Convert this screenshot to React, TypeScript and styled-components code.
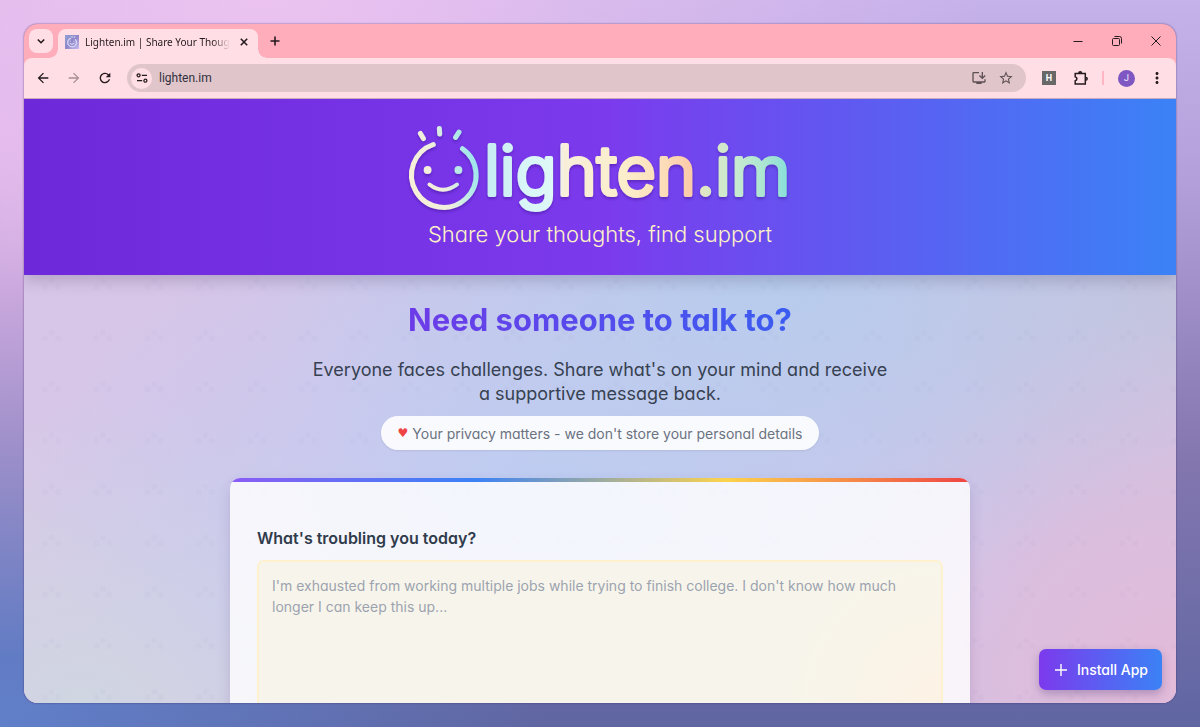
import React from "react";
import styled, { createGlobalStyle } from "styled-components";
import {
  MdArrowBack,
  MdArrowForward,
  MdRefresh,
  MdStarBorder,
  MdMoreVert,
  MdOutlineInstallDesktop,
} from "react-icons/md";

const bodyFont = `Inter, "Open Sans", sans-serif`;
const chromeFont = `Roboto, "Noto Sans", sans-serif`;

const GlobalStyle = createGlobalStyle`
  *, *::before, *::after { box-sizing: border-box; }
  body { margin: 0; font-family: ${bodyFont}; }
  button, input, textarea { font: inherit; color: inherit; border: 0; padding: 0; margin: 0; background: none; }
  button { cursor: pointer; }
  h1, h2, p { margin: 0; }
`;

const Desktop = styled.div`
  height: 100vh;
  padding: 24px;
  background:
    radial-gradient(ellipse 60% 45% at 22% 0%, rgba(238, 196, 241, 0.9), rgba(238, 196, 241, 0) 100%),
    radial-gradient(ellipse 50% 70% at 0% 20%, rgba(232, 186, 236, 0.8), rgba(232, 186, 236, 0) 100%),
    radial-gradient(ellipse 45% 60% at 0% 100%, rgba(96, 130, 206, 0.9), rgba(96, 130, 206, 0) 100%),
    linear-gradient(to bottom, #c6b2ea 0%, #b3a0da 25%, #8577b0 62%, #5f66a2 100%);
`;

const BrowserWindow = styled.div`
  height: 100%;
  display: flex;
  flex-direction: column;
  overflow: hidden;
  border-radius: 14px;
  background: #ffadbb;
  box-shadow: 0 0 2px rgba(50, 30, 90, 0.7);
`;

const TabStrip = styled.div`
  display: flex;
  align-items: center;
  height: 34px;
  flex: none;
  padding: 0 1px 0 5px;
  color: #251a1e;
`;

const TabSearch = styled.button`
  display: grid;
  place-items: center;
  width: 24px;
  height: 24px;
  border-radius: 8px;
  background: #ffdfe5;
`;

const Tab = styled.div`
  position: relative;
  align-self: flex-end;
  display: flex;
  align-items: center;
  gap: 6px;
  width: 200px;
  height: 29px;
  margin-left: 5px;
  padding: 0 6px 4px 7px;
  border-radius: 8px 8px 0 0;
  background: #ffdfe5;
  font: 10px/16px "Noto Sans", sans-serif;
  &::before, &::after {
    content: "";
    position: absolute;
    bottom: 0;
    width: 8px;
    height: 8px;
  }
  &::before {
    left: -8px;
    background: radial-gradient(circle at 0 0, transparent 7px, #ffdfe5 8px);
  }
  &::after {
    right: -8px;
    background: radial-gradient(circle at 100% 0, transparent 7px, #ffdfe5 8px);
  }
`;

const TabTitle = styled.span`
  flex: 1;
  min-width: 0;
  white-space: nowrap;
  mask-image: linear-gradient(to right, #000 88%, transparent);
`;

const PlainButton = styled.button`
  display: grid;
  place-items: center;
  flex: none;
  width: 16px;
  height: 16px;
`;

const NewTab = styled(PlainButton)`
  width: 24px;
  height: 24px;
  margin-left: 5px;
`;

const WindowControls = styled.div`
  display: flex;
  margin-left: auto;
`;

const WindowButton = styled.button`
  display: grid;
  place-items: center;
  width: 39px;
  height: 34px;
`;

const Toolbar = styled.div`
  display: flex;
  align-items: center;
  flex: none;
  height: 41px;
  padding: 0 9px 0 5px;
  border-radius: 8px 8px 0 0;
  border-bottom: 1px solid #c9aab8;
  background: #ffdfe5;
  color: #251a1e;
`;

const NavButtons = styled.div`
  display: flex;
  gap: 3px;
  margin-right: 8px;
`;

const ToolButton = styled.button<{ $muted?: boolean }>`
  display: grid;
  place-items: center;
  width: 28px;
  height: 28px;
  color: ${(p) => (p.$muted ? "#a98f96" : "#251a1e")};
`;

const Omnibox = styled.div`
  display: flex;
  align-items: center;
  flex: 1;
  height: 28px;
  padding: 0 12px 0 4px;
  border-radius: 14px;
  background: #e0c5cb;
  color: #5d5054;
`;

const SiteChip = styled.button`
  display: grid;
  place-items: center;
  width: 21px;
  height: 21px;
  border-radius: 50%;
  background: #ffdfe5;
  color: #251a1e;
`;

const Address = styled.input`
  flex: 1;
  min-width: 0;
  margin-left: 7px;
  outline: 0;
  font: 12px/18px ${chromeFont};
  color: #30303c;
`;

const OmniActions = styled.div`
  display: flex;
  gap: 11px;
`;

const Extensions = styled.div`
  display: flex;
  align-items: center;
  gap: 4px;
  margin-left: 9px;
`;

const HBadge = styled.span`
  display: grid;
  place-items: center;
  width: 14px;
  height: 14px;
  background: #686868;
  color: #fff;
  font: 700 9px/14px Roboto, sans-serif;
`;

const Separator = styled.span`
  width: 2px;
  height: 14px;
  margin: 0 14px 0 7px;
  background: #ffb5c3;
`;

const Avatar = styled.button`
  width: 17px;
  height: 17px;
  margin-right: 12px;
  border-radius: 50%;
  background: #7e57c2;
  color: #f2eafb;
  font: 9px/17px Roboto, sans-serif;
  text-align: center;
`;

const MenuButton = styled(PlainButton)`
  width: 20px;
  height: 28px;
`;

const PageFrame = styled.div`
  position: relative;
  flex: 1;
  min-height: 0;
  overflow: hidden;
`;

const Page = styled.main`
  position: relative;
  height: 100%;
  overflow: hidden auto;
  scrollbar-width: none;
  font-feature-settings: "cv11" 1;
  background:
    radial-gradient(ellipse 45% 55% at 65% 28%, rgba(180, 205, 238, 0.9), rgba(180, 205, 238, 0) 100%),
    radial-gradient(ellipse 45% 50% at 45% 65%, rgba(190, 206, 244, 0.9), rgba(190, 206, 244, 0) 100%),
    radial-gradient(ellipse 40% 50% at 5% 100%, rgba(208, 214, 226, 1), rgba(208, 214, 226, 0) 100%),
    radial-gradient(ellipse 35% 60% at 100% 95%, rgba(227, 187, 217, 1), rgba(227, 187, 217, 0) 100%),
    radial-gradient(ellipse 40% 45% at 100% 30%, rgba(199, 194, 218, 1), rgba(199, 194, 218, 0) 100%),
    linear-gradient(to right, #d8c6e8, #d0c2e6);
`;

const Backdrop = styled.svg`
  position: absolute;
  inset: 0;
  width: 100%;
  height: 100%;
  pointer-events: none;
`;

const Hero = styled.header`
  position: relative;
  display: flex;
  flex-direction: column;
  align-items: center;
  gap: 3px;
  padding: 21px 16px 26px;
  background: linear-gradient(to right, #6d28d9 0%, #7c3aed 50%, #3b82f6 100%);
  box-shadow: 0 6px 14px rgba(40, 30, 70, 0.2);
`;

const LogoLink = styled.a`
  display: block;
  height: 96px;
`;

const Tagline = styled.p`
  font-size: 22px;
  font-weight: 300;
  line-height: 30px;
  color: #fef3c7;
`;

const Intro = styled.section`
  position: relative;
  display: flex;
  flex-direction: column;
  align-items: center;
  padding: 25px 16px 28px;
  text-align: center;
`;

const Headline = styled.h2`
  font-size: 31px;
  font-weight: 700;
  line-height: 40px;
  background: linear-gradient(to right, #6d3be8, #3b5cf0);
  background-clip: text;
  color: transparent;
`;

const Lead = styled.p`
  max-width: 580px;
  margin-top: 18px;
  font-size: 18px;
  line-height: 24px;
  color: #374151;
`;

const PrivacyNote = styled.p`
  display: flex;
  align-items: center;
  gap: 4px;
  height: 34px;
  margin-top: 10px;
  padding: 0 17px;
  border-radius: 17px;
  background: rgba(255, 255, 255, 0.9);
  box-shadow: 0 1px 2px rgba(0, 0, 0, 0.08);
  font-size: 14px;
  color: #6b7280;
`;

const Heart = styled.span`
  font: 12px/18px "DejaVu Sans", sans-serif;
  color: #ef4444;
`;

const Card = styled.form`
  position: relative;
  width: calc(100% - 32px);
  max-width: 740px;
  margin: 0 auto;
  overflow: hidden;
  border-radius: 10px;
  background: rgba(255, 255, 255, 0.82);
  box-shadow: 0 6px 14px rgba(60, 40, 110, 0.16);
`;

const Rainbow = styled.div`
  height: 4px;
  background: linear-gradient(to right, #8b5cf6, #3b82f6 33%, #fcd34d 67%, #ef4444);
`;

const Fields = styled.div`
  display: flex;
  flex-direction: column;
  padding: 44px 27px 27px;
`;

const Label = styled.label`
  font-size: 16px;
  font-weight: 600;
  line-height: 24px;
  color: #303b4b;
`;

const Message = styled.textarea`
  height: 172px;
  margin-top: 10px;
  padding: 13px;
  border: 2px solid #fdf2cd;
  border-radius: 7px;
  outline: 0;
  resize: none;
  background:
    radial-gradient(circle at 100% 85%, rgba(255, 241, 226, 0.7), rgba(255, 241, 226, 0) 22%),
    #f7f5eb;
  font-size: 14px;
  line-height: 21px;
  color: #374151;
  &::placeholder { color: #9ca3af; opacity: 1; }
`;

const InstallButton = styled.button`
  position: absolute;
  right: 14px;
  bottom: 13px;
  display: flex;
  align-items: center;
  gap: 8px;
  height: 41px;
  padding: 0 14px;
  border-radius: 7px;
  background: linear-gradient(to right, #7c3aed, #3b82f6);
  box-shadow: 0 4px 10px rgba(60, 40, 110, 0.3);
  color: #fff;
  font-size: 14px;
  font-weight: 500;
  font-feature-settings: "cv11" 1;
`;

const Logo = () => (
  <svg width="392" height="96" viewBox="0 0 392 96" role="img" aria-label="lighten.im">
    <defs>
      <linearGradient id="face" gradientUnits="userSpaceOnUse" x1="4" y1="60" x2="74" y2="40">
        <stop offset="0" stopColor="#f8f0d8" />
        <stop offset="0.45" stopColor="#efeedd" />
        <stop offset="0.8" stopColor="#b4e9e8" />
        <stop offset="1" stopColor="#9ae4ee" />
      </linearGradient>
      <linearGradient id="word" gradientUnits="userSpaceOnUse" x1="83" y1="0" x2="389" y2="0">
        <stop offset="0" stopColor="#c6edf2" />
        <stop offset="0.12" stopColor="#d8f5f7" />
        <stop offset="0.23" stopColor="#dff8f6" />
        <stop offset="0.25" stopColor="#f8efdb" />
        <stop offset="0.45" stopColor="#fbeecb" />
        <stop offset="0.58" stopColor="#fcdcb8" />
        <stop offset="0.685" stopColor="#fbc7a6" />
        <stop offset="0.69" stopColor="#e4e6c4" />
        <stop offset="0.82" stopColor="#c6ead0" />
        <stop offset="0.92" stopColor="#a6e4d2" />
        <stop offset="1" stopColor="#7fdedc" />
      </linearGradient>
      <filter id="lift" x="-5%" y="-10%" width="110%" height="125%">
        <feDropShadow dx="0" dy="2" stdDeviation="1.5" floodColor="#2a1070" floodOpacity="0.35" />
      </filter>
    </defs>
    <g filter="url(#lift)">
      <g fill="none" stroke="url(#face)" strokeWidth="5" strokeLinecap="round">
        <path d="M29.3 24.5 A32.3 32.3 0 1 0 58.5 28.7" />
        <path d="M25.5 64.5 Q39 75 53 64.5" strokeWidth="4" />
        <path d="M16.4 13.5 L19.4 18.5" />
        <path d="M35.4 8.6 L35.7 14" />
        <path d="M55 12.2 L51.6 17.4" />
      </g>
      <circle cx="23.6" cy="50" r="3.9" fill="#f4eedc" />
      <circle cx="54.4" cy="50" r="3.9" fill="#b8e9e6" />
      <text
        x="80"
        y="75"
        fontFamily="Inter, sans-serif"
        fontWeight="300"
        fontSize="68"
        fill="url(#word)"
        stroke="url(#word)"
        strokeWidth="4"
        strokeLinejoin="round"
      >
        lighten.im
      </text>
    </g>
  </svg>
);

const Favicon = () => (
  <svg width="14" height="14" viewBox="0 0 14 14" aria-hidden="true">
    <defs>
      <linearGradient id="fav" x1="0" y1="0" x2="1" y2="1">
        <stop offset="0" stopColor="#8fa0d6" />
        <stop offset="0.5" stopColor="#8f86c9" />
        <stop offset="1" stopColor="#c7bdf0" />
      </linearGradient>
    </defs>
    <rect width="14" height="14" fill="url(#fav)" />
    <path d="M5.5 3.4 A4.4 4.4 0 1 0 10.4 4.6" fill="none" stroke="#dcdcf6" strokeWidth="1.2" strokeLinecap="round" />
    <path d="M5 8.6 Q7 10.4 9 8.4 M5.2 6.3 h0.1 M8.8 6.3 h0.1 M7 1.4 V2.2 M9.8 1.6 L9.3 2.5" fill="none" stroke="#eeeefc" strokeWidth="0.9" strokeLinecap="round" />
  </svg>
);

const Glyph = ({ d, size = 12, width = 1.5 }: { d: string; size?: number; width?: number }) => (
  <svg width={size} height={size} viewBox={`0 0 ${size} ${size}`} fill="none" stroke="currentColor" strokeWidth={width} aria-hidden="true">
    <path d={d} />
  </svg>
);

export default function App() {
  return (
    <>
      <GlobalStyle />
      <Desktop>
        <BrowserWindow>
          <TabStrip>
            <TabSearch aria-label="Search tabs"><Glyph d="M2.8 4.5 L6 7.7 L9.2 4.5" width={1.6} /></TabSearch>
            <Tab>
              <Favicon />
              <TabTitle>Lighten.im | Share Your Though</TabTitle>
              <PlainButton aria-label="Close tab"><Glyph d="M2.8 2.8 L9.2 9.2 M9.2 2.8 L2.8 9.2" width={1.6} /></PlainButton>
            </Tab>
            <NewTab aria-label="New tab"><Glyph d="M6 1.5 V10.5 M1.5 6 H10.5" width={1.6} /></NewTab>
            <WindowControls>
              <WindowButton aria-label="Minimize"><Glyph d="M1.5 6.5 H10.5" width={1} /></WindowButton>
              <WindowButton aria-label="Restore"><Glyph d="M2.5 3.5 H7.5 Q8.5 3.5 8.5 4.5 V9.5 Q8.5 10.5 7.5 10.5 H2.5 Q1.5 10.5 1.5 9.5 V4.5 Q1.5 3.5 2.5 3.5 Z M3.5 1.5 H8.5 Q10.5 1.5 10.5 3.5 V8.5" width={1} /></WindowButton>
              <WindowButton aria-label="Close"><Glyph d="M1.5 1.5 L10.5 10.5 M10.5 1.5 L1.5 10.5" width={1} /></WindowButton>
            </WindowControls>
          </TabStrip>
          <Toolbar>
            <NavButtons>
              <ToolButton aria-label="Back"><MdArrowBack size={16} /></ToolButton>
              <ToolButton aria-label="Forward" $muted><MdArrowForward size={16} /></ToolButton>
              <ToolButton aria-label="Reload"><MdRefresh size={16} /></ToolButton>
            </NavButtons>
            <Omnibox>
              <SiteChip aria-label="View site information">
                <svg width="12" height="12" viewBox="0 0 12 12" fill="none" stroke="currentColor" strokeWidth="1.3" aria-hidden="true">
                  <circle cx="2.6" cy="3.3" r="1.5" />
                  <path d="M5.8 3.3 H11 M1 8.7 H6.2" />
                  <circle cx="9.4" cy="8.7" r="1.5" />
                </svg>
              </SiteChip>
              <Address aria-label="Address" defaultValue="lighten.im" />
              <OmniActions>
                <PlainButton aria-label="Install Lighten.im"><MdOutlineInstallDesktop size={16} /></PlainButton>
                <PlainButton aria-label="Bookmark this tab"><MdStarBorder size={16} /></PlainButton>
              </OmniActions>
            </Omnibox>
            <Extensions>
              <ToolButton aria-label="Extension H"><HBadge>H</HBadge></ToolButton>
              <ToolButton aria-label="Extensions">
                <Glyph
                  size={16}
                  width={1.5}
                  d="M2.2 3.6 H12.3 V13.9 H2.2 V10.8 Q3.9 10.4 3.9 8.8 Q3.9 7.2 2.2 6.8 Z M5.8 3.2 Q5.8 1.8 7.2 1.8 Q8.6 1.8 8.6 3.2 M12.8 7.4 Q14.2 7.4 14.2 8.8 Q14.2 10.2 12.8 10.2"
                />
              </ToolButton>
            </Extensions>
            <Separator />
            <Avatar aria-label="Profile J">J</Avatar>
            <MenuButton aria-label="Menu"><MdMoreVert size={18} /></MenuButton>
          </Toolbar>
          <PageFrame>
            <Page>
              <Backdrop aria-hidden="true">
                <defs>
                  <pattern id="dots" width="51.3" height="51.3" patternUnits="userSpaceOnUse" x="2" y="24">
                    <g fill="#6f6698" fillOpacity="0.03">
                      <circle cx="25.6" cy="4.5" r="3" />
                      <circle cx="19" cy="10" r="3" />
                      <circle cx="32" cy="10" r="3" />
                    </g>
                  </pattern>
                </defs>
                <rect width="100%" height="100%" fill="url(#dots)" />
              </Backdrop>
              <Hero>
                <LogoLink href="#"><Logo /></LogoLink>
                <Tagline>Share your thoughts, find support</Tagline>
              </Hero>
              <Intro>
                <Headline>Need someone to talk to?</Headline>
                <Lead>Everyone faces challenges. Share what's on your mind and receive a supportive message back.</Lead>
                <PrivacyNote><Heart>♥</Heart>Your privacy matters - we don't store your personal details</PrivacyNote>
              </Intro>
              <Card>
                <Rainbow />
                <Fields>
                  <Label htmlFor="message">What's troubling you today?</Label>
                  <Message
                    id="message"
                    placeholder="I'm exhausted from working multiple jobs while trying to finish college. I don't know how much longer I can keep this up..."
                  />
                </Fields>
              </Card>
            </Page>
            <InstallButton>
              <Glyph size={16} width={1.4} d="M8 2 V14 M2 8 H14" />
              Install App
            </InstallButton>
          </PageFrame>
        </BrowserWindow>
      </Desktop>
    </>
  );
}
